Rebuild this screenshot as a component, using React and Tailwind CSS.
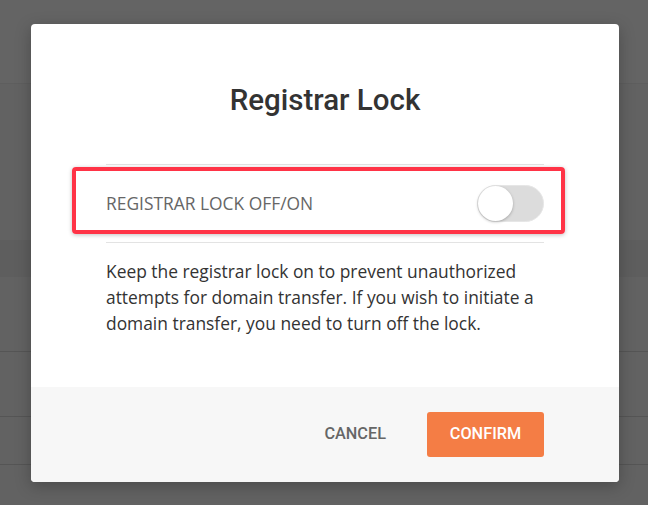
import React, { useState } from 'react';

const App = () => {
  const [locked, setLocked] = useState(false);

  return (
    <div className="relative w-[648px] h-[505px] overflow-hidden bg-[#626262]" style={{ fontFamily: 'Roboto, "Liberation Sans", sans-serif' }}>
      {/* Dimmed page behind the modal */}
      <div className="flex flex-col">
        <div className="h-[84px] bg-[#646464] border-b border-[#5e5e5e]"></div>
        <div className="h-[156px]"></div>
        <div className="h-[37px] bg-[#5e5e5e]"></div>
        <div className="h-[75px] border-b border-[#555]"></div>
        <div className="h-[65px] border-b border-[#555]"></div>
        <div className="h-[48px] border-b border-[#555]"></div>
      </div>

      {/* Modal */}
      <div className="absolute left-[31px] top-[24px] w-[588px] h-[458px] bg-white rounded-[4px] shadow-[0_4px_16px_rgba(0,0,0,0.25)] flex flex-col overflow-hidden">
        <div className="flex-1 px-[75px] pt-[58px]">
          <h2 className="text-[29.5px] leading-[36px] text-center text-[#333] font-medium">Registrar Lock</h2>

          <div className="relative mt-[46px] h-[79px] border-y border-[#e3e3e3] flex items-center justify-between">
            <span className="text-[17.4px] text-[#666]" style={{ fontFamily: '"Open Sans", "Liberation Sans", sans-serif' }}>REGISTRAR LOCK OFF/ON</span>
            <button
              onClick={() => setLocked(!locked)}
              className={`relative w-[67px] h-[37px] rounded-full border border-[#e6e6e6] ${locked ? 'bg-[#f47d45]' : 'bg-[#dcdcdc]'}`}
            >
              <span
                className={`absolute top-0 w-[35px] h-[35px] rounded-full bg-white shadow-[0_1px_3px_rgba(0,0,0,0.25)] ${locked ? 'left-[30px]' : 'left-0'}`}
              ></span>
            </button>
            {/* highlight annotation */}
            <div className="absolute left-[-34px] right-[-21px] top-[2px] h-[67px] border-4 border-[#ff3346] rounded-[4px] shadow-[0_1px_4px_rgba(0,0,0,0.25)] pointer-events-none"></div>
          </div>

          <p className="mt-[15px] text-[17.4px] leading-[26px] text-[#333]" style={{ fontFamily: '"Open Sans", "Liberation Sans", sans-serif' }}>
            Keep the registrar lock on to prevent unauthorized attempts for domain transfer. If you wish to initiate a domain transfer, you need to turn off the lock.
          </p>
        </div>

        {/* Footer */}
        <div className="h-[95px] bg-[#f7f7f7] flex items-center justify-end pr-[75px]">
          <button className="text-[16.3px] font-medium text-[#666] mr-[41px]">CANCEL</button>
          <button className="w-[117px] h-[45px] rounded-[3px] bg-[#f47d45] text-white text-[16.3px] font-medium">CONFIRM</button>
        </div>
      </div>
    </div>
  );
};

export default App;
